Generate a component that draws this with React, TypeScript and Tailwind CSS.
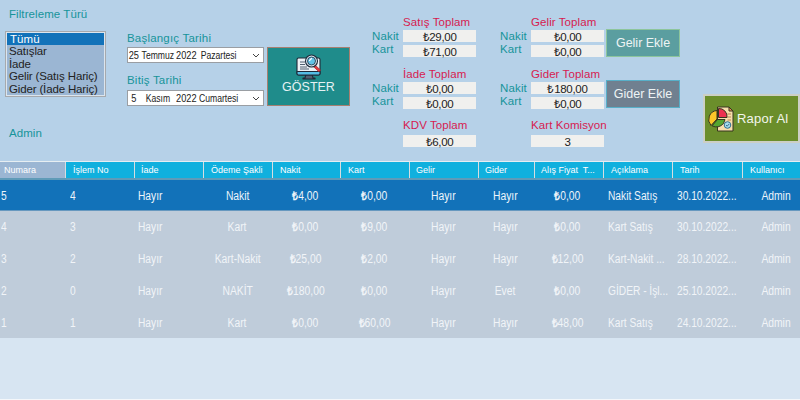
import React from "react";

const columns = [
  { title: "Numara", head: "w-[65px] pl-[4px]", cell: "w-[65px] pl-[1px]", center: false },
  { title: "İşlem No", head: "w-[69px] pl-[7px]", cell: "w-[69px] pl-[5px]", center: false },
  { title: "İade", head: "w-[69px] pl-[6px]", cell: "w-[69px] pl-[4px]", center: false },
  { title: "Ödeme Şakli", head: "w-[69px] pl-[7px]", cell: "w-[69px]", center: true },
  { title: "Nakit", head: "w-[68px] pl-[7px]", cell: "w-[67px]", center: true },
  { title: "Kart", head: "w-[69px] pl-[7px]", cell: "w-[71px]", center: true },
  { title: "Gelir", head: "w-[69px] pl-[6px]", cell: "w-[66px]", center: true },
  { title: "Gider", head: "w-[56px] pl-[6px]", cell: "w-[58px]", center: true },
  { title: "Alış Fiyat  T...", head: "w-[69px] pl-[6px]", cell: "w-[67px]", center: true },
  { title: "Açıklama", head: "w-[69px] pl-[7px]", cell: "w-[71px] pl-[7px]", center: false },
  { title: "Tarih", head: "w-[70px] pl-[7px]", cell: "w-[70px] pl-[5px]", center: false },
  { title: "Kullanıcı", head: "w-[58px] pl-[7px]", cell: "w-[58px] pl-[10px]", center: true },
];

const rows = [
  ["5", "4", "Hayır", "Nakit", "₺4,00", "₺0,00", "Hayır", "Hayır", "₺0,00", "Nakit Satış", "30.10.2022...", "Admin"],
  ["4", "3", "Hayır", "Kart", "₺0,00", "₺9,00", "Hayır", "Hayır", "₺0,00", "Kart Satış", "30.10.2022...", "Admin"],
  ["3", "2", "Hayır", "Kart-Nakit", "₺25,00", "₺2,00", "Hayır", "Hayır", "₺12,00", "Kart-Nakit ...", "28.10.2022...", "Admin"],
  ["2", "0", "Hayır", "NAKİT", "₺180,00", "₺0,00", "Hayır", "Evet", "₺0,00", "GİDER - İşl...", "25.10.2022...", "Admin"],
  ["1", "1", "Hayır", "Kart", "₺0,00", "₺60,00", "Hayır", "Hayır", "₺48,00", "Kart Satış", "24.10.2022...", "Admin"],
];

const filters = ["Tümü", "Satışlar", "İade", "Gelir (Satış Hariç)", "Gider (İade Hariç)"];

function DateField({ day, month, year, weekday }: { day: string; month: string; year: string; weekday: React.ReactNode }) {
  return (
    <div className="flex h-4 w-[137px] items-center border border-[#9a9ea3] bg-white text-[10.5px] leading-[15px] tracking-normal text-[#222]">
      <span className="flex w-[12px] justify-center">
        <span className="scale-x-[0.88]">{day}</span>
      </span>
      <span className="flex w-[36px] justify-center">
        <span className="scale-x-[0.82]">{month}</span>
      </span>
      <span className="w-[23px] origin-left scale-x-[0.88]">{year}</span>
      <span className="w-[48px] origin-left scale-x-[0.82] whitespace-nowrap">{weekday}</span>
      <svg className="ml-auto mr-[3px] h-[5px] w-[8px]" viewBox="0 0 8 5" fill="none" stroke="#444" strokeWidth="1">
        <path d="M1 1l3 3 3-3" />
      </svg>
    </div>
  );
}

function Value({ children }: { children: React.ReactNode }) {
  return (
    <div className="h-3 w-[73px] bg-[#f0f0ee] text-center text-[11.5px] leading-[15px] tracking-[-0.3px] text-[#222]">
      {children}
    </div>
  );
}

function Total({ title, cash, card }: { title: string; cash: string; card: string }) {
  return (
    <div>
      <div className="h-[15px] pl-[31px] text-[11.5px] leading-[15px] tracking-[0.08px] text-[#d61b50]">{title}</div>
      <div className="flex">
        <div className="w-[31px] text-[11.5px] leading-[13px] tracking-[0.15px] text-[#16949a]">
          <div>Nakit</div>
          <div>Kart</div>
        </div>
        <div className="flex flex-col gap-[3px]">
          <Value>{cash}</Value>
          <Value>{card}</Value>
        </div>
      </div>
    </div>
  );
}

function CellText({ text }: { text: string }) {
  if (!text.startsWith("₺")) return <>{text}</>;
  return (
    <>
      <span className="font-bold">₺</span>
      {text.slice(1)}
    </>
  );
}

function SearchMonitor() {
  return (
    <svg className="h-[26px] w-[26px]" viewBox="0 0 26 26" stroke="#202938" strokeWidth="1.1" strokeLinejoin="round">
      <path d="M10 20h6l1 4h2v1H7v-1h2z" fill="#526171" />
      <rect x="1" y="4" width="23" height="17" rx="1.5" fill="#eef2f6" />
      <path d="M1 17.5h23v2q0 1.5-1.5 1.5h-20Q1 21 1 19.500z" fill="#55bee5" />
      <path d="M4 8h5M4 10.500h5M4 13h7M4 15h9" fill="none" stroke="#526171" />
      <path d="M19.500 11.500l5 4.500-1.600 1.800-5-4.800z" fill="#e63b3f" stroke="#a6272f" strokeWidth=".7" />
      <circle cx="15.500" cy="7" r="6" fill="#d7e9f4" />
      <circle cx="15.500" cy="7" r="4" fill="#62c4e8" strokeWidth=".8" />
      <path d="M13.500 6.500l2-2" stroke="#fff" strokeLinecap="round" />
    </svg>
  );
}

function ReportChart() {
  return (
    <svg className="h-[26px] w-[26px] shrink-0" viewBox="0 0 26 26" stroke="#37351f" strokeWidth="1" strokeLinejoin="round">
      <path d="M9.500 1h11.500l4 4v20H9.500z" fill="#f8deac" />
      <path d="M21 1v4h4z" fill="#e88a50" />
      <path d="M19.500 8h3.500M19.500 11h3.500M19.500 14h3.500" stroke="#b78550" />
      <path d="M9 13V4.500a9 9 0 0 0-6 15z" fill="#fcc629" />
      <path d="M9.500 13.500l-5.500 6.300Q10.500 23 15.500 17.500l1.500-4z" fill="#55a630" />
      <path d="M10.500 11.500V2.500a8 8 0 0 1 8.500 9z" fill="#ed3150" />
      <circle cx="19.500" cy="19" r="3.300" fill="#a5dcee" stroke="#316f8d" />
      <path d="M18 19l1.200 1.200 2-2.200" fill="none" stroke="#244f6d" strokeWidth=".8" />
    </svg>
  );
}

export default function App() {
  return (
    <div className="flex h-[400px] w-[800px] flex-col overflow-hidden bg-[#b6d1e8] font-['Liberation_Sans',Arial,sans-serif]">
      <section className="flex h-[161px] items-start whitespace-nowrap">
        <div className="w-[121px] pt-[7px] text-[#16949a]">
          <div className="h-[15px] pl-[9px] text-[11.5px] leading-[15px] tracking-[0.08px]">Filtreleme Türü</div>
          <div className="ml-[5px] mt-[9px] h-[66px] w-[101px] border border-[#a6a9ad] bg-[#9bb6d3] p-px text-[11.5px] text-[#222] outline outline-offset-[-2px] outline-[#dce5ed]">
            {filters.map((name, i) => (
              <div
                key={name}
                className={
                  i === 0
                    ? "h-[12px] bg-[#1272b9] pl-[3px] leading-[13px] tracking-[0.1px] text-white"
                    : "h-[12.7px] pl-[2px] leading-[13px] tracking-[-0.15px]"
                }
              >
                {name}
              </div>
            ))}
          </div>
          <div className="mt-[29px] h-[15px] pl-[9px] text-[11.5px] leading-[15px] tracking-[0.05px]">Admin</div>
        </div>

        <div className="w-[146px] pl-[6px] pt-[31px] text-[11.5px] leading-[15px] tracking-[0.2px] text-[#16949a]">
          <div className="mb-px h-[15px]">Başlangıç Tarihi</div>
          <DateField day="25" month="Temmuz" year="2022" weekday={<span className="pl-[2px]">Pazartesi</span>} />
          <div className="mb-[2px] mt-[10px] h-[15px]">Bitiş Tarihi</div>
          <DateField day="5" month="Kasım" year="2022" weekday="Cumartesi" />
        </div>

        <button className="mt-[47px] flex h-[59px] w-[83px] flex-col items-center border border-[#a77f70] bg-[#1f8c8b] pt-[6px] text-[12.5px] leading-[15px] text-[#e6f2f4]">
          <SearchMonitor />
          <span>GÖSTER</span>
        </button>

        <div className="ml-[22px] flex w-[128px] flex-col pt-[15px]">
          <Total title="Satış Toplam" cash="₺29,00" card="₺71,00" />
          <div className="mt-[10px]">
            <Total title="İade Toplam" cash="₺0,00" card="₺0,00" />
          </div>
          <div className="ml-[31px] mt-[9px]">
            <div className="h-[17px] text-[11.5px] leading-[15px] tracking-[0.08px] text-[#d61b50]">KDV Toplam</div>
            <Value>₺6,00</Value>
          </div>
        </div>

        <div className="flex w-[106px] flex-col pt-[15px]">
          <Total title="Gelir Toplam" cash="₺0,00" card="₺0,00" />
          <div className="mt-[10px]">
            <Total title="Gider Toplam" cash="₺180,00" card="₺0,00" />
          </div>
          <div className="ml-[31px] mt-[9px]">
            <div className="h-[17px] text-[11.5px] leading-[15px] tracking-[0.08px] text-[#d61b50]">Kart Komisyon</div>
            <Value>3</Value>
          </div>
        </div>

        <div className="flex w-[97px] flex-col gap-[23px] pt-[29px] text-[12.5px] text-[#eef4f5]">
          <button className="h-7 w-[74px] border border-[#8dc59c] bg-[#5b9ea0] pt-px">Gelir Ekle</button>
          <button className="h-7 w-[74px] border border-[#58afc8] bg-[#708090]">Gider Ekle</button>
        </div>

        <button className="mt-[94px] flex h-[49px] w-[97px] items-center border-2 border-[#cccfc5] bg-[#6b8e2b] pl-[3px] text-[13px] tracking-[0.2px] text-[#f3f6ed]">
          <ReportChart />
          <span className="ml-[3px]">Rapor Al</span>
        </button>
      </section>

      <section className="flex flex-1 flex-col bg-[#d7e5f2]">
        <div className="flex h-[19px] border-b-2 border-t border-b-[#5f9bb8] border-t-[#e6eef2] text-[9px] leading-[17px] text-white">
          {columns.map((column, i) => (
            <div
              key={column.title}
              className={`${column.head} shrink-0 whitespace-pre ${i === 0 ? "bg-[#9bb6d3]" : "border-l border-[#d7dde0] bg-[#10b0de]"}`}
            >
              {column.title}
            </div>
          ))}
        </div>
        {rows.map((row, i) => (
          <div
            key={row[0]}
            className={`flex shrink-0 items-center pt-px text-[12px] ${i === 0 ? "h-[31px] border-b border-[#6798bf] bg-[#1272b9] text-[#edf5fb]" : "h-[31.750px] bg-[#bfccda] text-[#f1f4f8]"}`}
          >
            {row.map((text, c) => (
              <div key={c} className={`${columns[c].cell} flex shrink-0 whitespace-nowrap ${columns[c].center ? "justify-center" : ""}`}>
                <span className={columns[c].center ? "scale-x-[0.86]" : "origin-left scale-x-[0.85]"}>
                  <CellText text={text} />
                </span>
              </div>
            ))}
          </div>
        ))}
        <div className="mt-auto h-px bg-[#f4f7fa]" />
      </section>
    </div>
  );
}
